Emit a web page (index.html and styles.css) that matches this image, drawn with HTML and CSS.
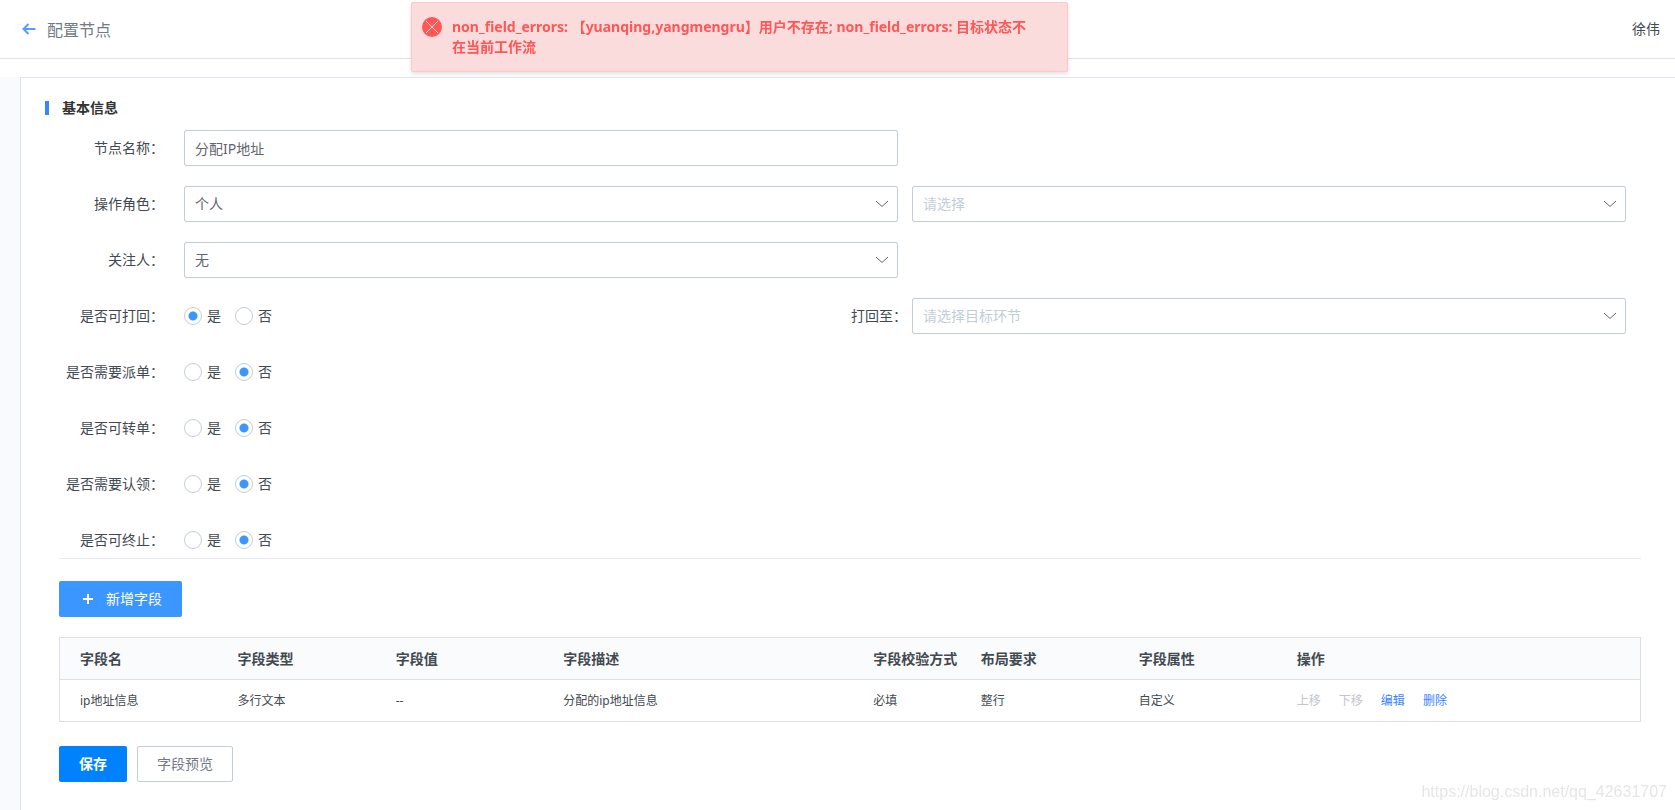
FILE: index.html
```html
<!DOCTYPE html>
<html lang="zh-CN">
<head>
<meta charset="utf-8">
<title>配置节点</title>
<link rel="stylesheet" href="styles.css">
</head>
<body>
<header class="topbar">
  <a class="back" href="#" aria-label="返回">
    <svg viewBox="0 0 14 12" width="14" height="12"><path d="M13.5 6H1.5M6.5 1 1.5 6l5 5"/></svg>
  </a>
  <h1 class="topbar-title">配置节点</h1>
  <span class="user">徐伟</span>
</header>

<div class="alert" role="alert">
  <svg class="alert-icon" viewBox="0 0 20 20" width="20" height="20"><circle cx="10" cy="10" r="10"/><path d="M4 4l12 12M16 4l-12 12"/></svg>
  <p class="alert-text">non_field_errors: 【yuanqing,yangmengru】用户不存在; non_field_errors: 目标状态不在当前工作流</p>
</div>

<main class="page">
  <section class="panel">
    <h2 class="section-title">基本信息</h2>
    <form class="content">
      <div class="fields">
        <div class="row">
          <label class="label" for="name">节点名称：</label>
          <input class="control" id="name" type="text" value="分配IP地址">
        </div>
        <div class="row">
          <label class="label" for="role">操作角色：</label>
          <div class="select-box">
            <select class="control" id="role"><option>个人</option></select>
            <svg class="chevron" viewBox="0 0 14 8" width="14" height="8"><path d="M1 1l6 5.500 6-5.500"/></svg>
          </div>
          <div class="select-box">
            <select class="control empty" aria-label="处理人"><option>请选择</option></select>
            <svg class="chevron" viewBox="0 0 14 8" width="14" height="8"><path d="M1 1l6 5.500 6-5.500"/></svg>
          </div>
        </div>
        <div class="row">
          <label class="label" for="follow">关注人：</label>
          <div class="select-box">
            <select class="control" id="follow"><option>无</option></select>
            <svg class="chevron" viewBox="0 0 14 8" width="14" height="8"><path d="M1 1l6 5.500 6-5.500"/></svg>
          </div>
        </div>
        <div class="row">
          <span class="label" id="l-back">是否可打回：</span>
          <div class="side-by-side">
            <div class="radios" role="radiogroup" aria-labelledby="l-back">
              <label class="radio"><input type="radio" name="back" checked>是</label>
              <label class="radio"><input type="radio" name="back">否</label>
            </div>
            <label class="inner-label" for="target">打回至：</label>
          </div>
          <div class="select-box">
            <select class="control empty" id="target"><option>请选择目标环节</option></select>
            <svg class="chevron" viewBox="0 0 14 8" width="14" height="8"><path d="M1 1l6 5.500 6-5.500"/></svg>
          </div>
        </div>
        <div class="row">
          <span class="label" id="l-dispatch">是否需要派单：</span>
          <div class="radios" role="radiogroup" aria-labelledby="l-dispatch">
            <label class="radio"><input type="radio" name="dispatch">是</label>
            <label class="radio"><input type="radio" name="dispatch" checked>否</label>
          </div>
        </div>
        <div class="row">
          <span class="label" id="l-transfer">是否可转单：</span>
          <div class="radios" role="radiogroup" aria-labelledby="l-transfer">
            <label class="radio"><input type="radio" name="transfer">是</label>
            <label class="radio"><input type="radio" name="transfer" checked>否</label>
          </div>
        </div>
        <div class="row">
          <span class="label" id="l-claim">是否需要认领：</span>
          <div class="radios" role="radiogroup" aria-labelledby="l-claim">
            <label class="radio"><input type="radio" name="claim">是</label>
            <label class="radio"><input type="radio" name="claim" checked>否</label>
          </div>
        </div>
        <div class="row">
          <span class="label" id="l-stop">是否可终止：</span>
          <div class="radios" role="radiogroup" aria-labelledby="l-stop">
            <label class="radio"><input type="radio" name="stop">是</label>
            <label class="radio"><input type="radio" name="stop" checked>否</label>
          </div>
        </div>
      </div>

      <button class="btn btn-add" type="button">
        <svg viewBox="0 0 10 10" width="10" height="10"><path d="M5 0v10M0 5h10"/></svg>
        新增字段
      </button>

      <table class="table">
        <colgroup>
          <col class="w-base"><col class="w-base"><col class="w-value"><col class="w-desc"><col class="w-check"><col class="w-base"><col class="w-base"><col>
        </colgroup>
        <thead>
          <tr><th>字段名</th><th>字段类型</th><th>字段值</th><th>字段描述</th><th>字段校验方式</th><th>布局要求</th><th>字段属性</th><th>操作</th></tr>
        </thead>
        <tbody>
          <tr>
            <td>ip地址信息</td><td>多行文本</td><td>--</td><td>分配的ip地址信息</td><td>必填</td><td>整行</td><td>自定义</td>
            <td>
              <div class="actions">
                <button class="link" type="button" disabled>上移</button>
                <button class="link" type="button" disabled>下移</button>
                <button class="link" type="button">编辑</button>
                <button class="link" type="button">删除</button>
              </div>
            </td>
          </tr>
        </tbody>
      </table>

      <div class="footer">
        <button class="btn btn-save" type="button">保存</button>
        <button class="btn btn-plain" type="button">字段预览</button>
      </div>
    </form>
  </section>
</main>
<div class="watermark">https://blog.csdn.net/qq_42631707</div>
</body>
</html>
```
FILE: styles.css
```css
* { box-sizing: border-box; }

body {
  margin: 0;
  min-height: 100vh;
  display: flex;
  flex-direction: column;
  background: #fff;
  color: #424950;
  font: 14px/20px "Noto Sans", "Noto Sans CJK SC", sans-serif;
}

h1, h2, p { margin: 0; }

input, select, button { font: inherit; }

svg { fill: none; stroke: currentColor; flex: none; }

.topbar {
  display: flex;
  align-items: center;
  height: 59px;
  padding: 0 15px 0 22px;
  border-bottom: 1px solid #dde4f0;
}

.back { display: flex; color: #5b9bff; }
.back svg { stroke-width: 2; }

.topbar-title {
  margin-left: 11px;
  padding-top: 2px;
  color: #737987;
  font-size: 16px;
  font-weight: 400;
}

.user { margin-left: auto; }

.alert {
  position: fixed;
  top: 2px;
  left: 411px;
  z-index: 2;
  display: flex;
  align-items: flex-start;
  gap: 10px;
  width: 657px;
  padding: 14px 32px 14px 10px;
  border: 1px solid #ffc7c7;
  border-radius: 2px;
  background: #fbdcdc;
  color: #ff5656;
  box-shadow: 0 2px 4px rgba(0, 0, 0, 0.12);
  font-weight: 700;
}

.alert-icon circle { fill: #ff5656; stroke: none; }
.alert-icon path { stroke: #fbdcdc; }

.page {
  flex: 1;
  display: flex;
  margin-top: 18px;
  padding-left: 20px;
  background: #f9fafe;
}

.panel {
  flex: 1;
  padding: 20px 34px 24px 24px;
  border: 1px solid #dde4eb;
  border-width: 1px 0 0 1px;
  background: #fff;
}

.section-title {
  display: flex;
  align-items: center;
  gap: 13px;
  font-size: 14px;
  line-height: 20px;
  color: #333;
}

.section-title::before {
  content: "";
  width: 4px;
  height: 14px;
  background: #3a84ff;
}

.content { margin-left: 14px; }

.fields {
  display: grid;
  gap: 20px;
  padding: 12px 15px 0 0;
  border-bottom: 1px solid #e9ebf0;
}

.row {
  display: grid;
  grid-template-columns: 111px 1fr 1fr;
  align-items: center;
  column-gap: 14px;
  min-height: 36px;
}

.label {
  justify-self: end;
  margin-right: 6px;
  white-space: nowrap;
}

.control {
  width: 100%;
  height: 36px;
  padding: 0 10px;
  border: 1px solid #c3cdd7;
  border-radius: 2px;
  background: #fff;
  color: #63656e;
  appearance: none;
}

.control.empty { color: #c3cdd7; }

.select-box { display: grid; align-items: center; }
.select-box > * { grid-area: 1 / 1; }

.chevron {
  justify-self: end;
  margin-right: 9px;
  color: #63656e;
  pointer-events: none;
}

.side-by-side {
  display: flex;
  align-items: center;
  justify-content: space-between;
}

.inner-label { margin-right: -9px; }

.radios { display: flex; gap: 14px; }

.radio { display: flex; align-items: center; gap: 5px; }

.radio input {
  appearance: none;
  width: 18px;
  height: 18px;
  margin: 0;
  border: 1px solid #c3cdd7;
  border-radius: 50%;
  background: #fff;
}

.radio input:checked {
  background: radial-gradient(circle, #3c96ff 4px, #fff 5px);
}

.btn {
  height: 36px;
  padding: 0 19px;
  border: 1px solid transparent;
  border-radius: 2px;
}

.btn-add {
  display: flex;
  align-items: center;
  gap: 13px;
  margin-top: 22px;
  padding: 0 19px 0 23px;
  background: #3c96ff;
  color: #fff;
}

.btn-add svg { stroke-width: 2; }

.btn-save { background: #0082ff; color: #fff; font-weight: 700; }

.btn-plain { border-color: #c3cdd7; background: #fff; color: #737987; }

.table {
  width: 100%;
  margin-top: 20px;
  border: 1px solid #dedfe1;
  border-collapse: collapse;
  table-layout: fixed;
  text-align: left;
}

.w-base { width: 10%; }
.w-value { width: 10.6%; }
.w-desc { width: 19.6%; }
.w-check { width: 6.8%; }

.table th, .table td {
  height: 42px;
  padding: 0 0 0 20px;
  border-bottom: 1px solid #dedfe1;
  white-space: nowrap;
}

.table th { background: #fafbfd; }
.table td { font-size: 12px; }

.actions { display: flex; gap: 18px; }

.link {
  padding: 0;
  border: 0;
  background: none;
  color: #3a84ff;
}

.link:disabled { color: #c4c6cc; }

.footer { display: flex; gap: 10px; margin-top: 24px; }

.watermark {
  position: fixed;
  right: 8px;
  bottom: 8px;
  color: #e6e6e6;
  font-family: "Liberation Sans", sans-serif;
  font-size: 16px;
}
```
